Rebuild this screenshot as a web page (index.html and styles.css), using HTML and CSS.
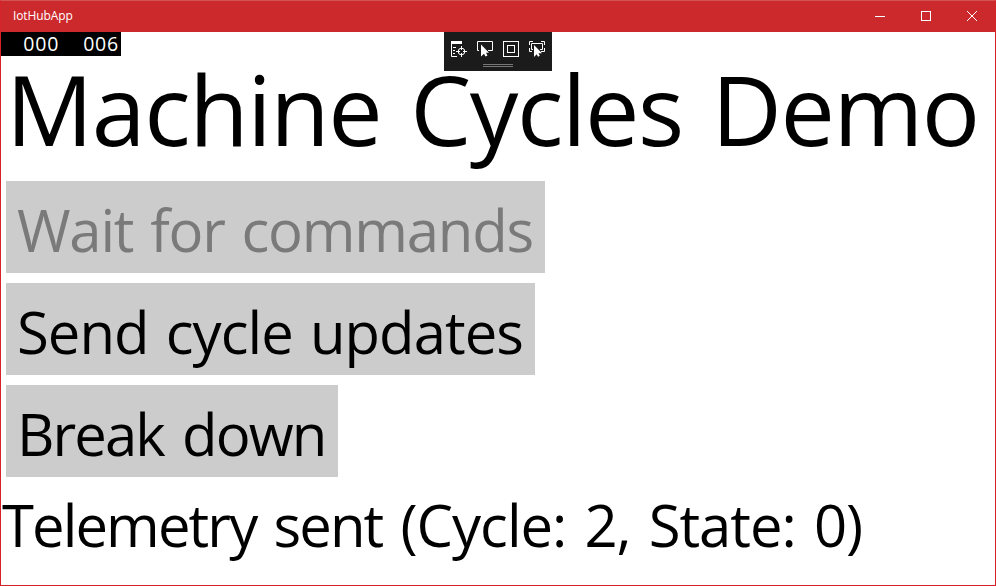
FILE: index.html
```
<!DOCTYPE html>
<html lang="en">
<head>
<meta charset="utf-8">
<title>IotHubApp</title>
<link rel="stylesheet" href="styles.css">
</head>
<body>
<div class="window">
  <header class="titlebar">
    <span class="app-name">IotHubApp</span>
    <div class="controls">
      <svg class="control" viewBox="0 0 46 31" shape-rendering="crispEdges"><path d="M18 15.500h10"/></svg>
      <svg class="control" viewBox="0 0 46 31" shape-rendering="crispEdges"><path d="M18.500 10.500h9v9h-9z"/></svg>
      <svg class="control" viewBox="0 0 46 31"><path d="M18 10l10 10M28 10l-10 10"/></svg>
    </div>
  </header>
  <main class="content">
    <div class="counters"><span>000</span><span>006</span></div>
    <div class="debug-bar">
      <div class="tools">
        <svg class="tool" viewBox="0 0 17 17"><path d="M1 1h11v3H1z" fill="#fff"/><path d="M1.500 3v13.500H7M3 7.500h3M3 10.500h2M3 13.500h2" class="line"/><circle cx="11.500" cy="11.500" r="3.300" class="line"/><path d="M11.500 6v4M11.500 13v4M6 11.500h4M13 11.500h4" class="line"/></svg>
        <svg class="tool" viewBox="0 0 17 17"><path d="M3 10.500H1.500v-9h15v9H12" class="line"/><path d="M5 4.500v12l3-2.800 1.500 2.800 2-1-1.500-2.700h3z" fill="#fff"/></svg>
        <svg class="tool" viewBox="0 0 17 17" shape-rendering="crispEdges"><path d="M1.500 1.500h15v15h-15zM5.500 5.500h7v7h-7z" class="line"/></svg>
        <svg class="tool" viewBox="0 0 17 17"><path d="M1.500 5V1.500H5M13 1.500h3.500V5M1.500 8v3.500H4M16.500 8v3.500H13M5 9.500H3.500v-6h11v6H12" class="line"/><path d="M6 5v12l2.700-2.700 1.300 2.400 1.800-.9-1.300-2.500H14z" fill="#fff"/></svg>
      </div>
      <div class="grip"></div>
    </div>
    <h1 class="title">Machine Cycles Demo</h1>
    <div class="actions">
      <button class="action wait" disabled>Wait for commands</button>
      <button class="action send">Send cycle updates</button>
      <button class="action break">Break down</button>
    </div>
    <p class="status"><span class="event">Telemetry sent</span> (Cycle: 2, State: 0)</p>
  </main>
</div>
</body>
</html>
```
FILE: styles.css
```
* { box-sizing: border-box; }
body { margin: 0; font-family: "Open Sans", "Noto Sans", sans-serif; color: #000; }
.window {
  width: 996px;
  height: 586px;
  overflow: hidden;
  background: #fff;
  border: 1px solid #d62328;
  border-top-color: #d35357;
}
.titlebar {
  height: 31px;
  padding-left: 12px;
  display: flex;
  justify-content: space-between;
  background: #cc292c;
  color: #fff;
}
.app-name { font-size: 12px; line-height: 30px; letter-spacing: -0.1px; }
.controls { display: flex; }
.control { width: 46px; height: 31px; fill: none; stroke: #fff; stroke-width: 1; }
.content { position: relative; }
.counters {
  position: absolute;
  top: 0;
  left: 0;
  width: 120px;
  height: 24px;
  padding-right: 2px;
  display: flex;
  justify-content: flex-end;
  gap: 24px;
  background: #000;
  color: #fff;
  font-size: 19.5px;
  line-height: 23px;
  letter-spacing: 0.8px;
}
.debug-bar {
  position: absolute;
  top: 0;
  left: 443px;
  width: 108px;
  height: 39px;
  padding: 8px 6px 0;
  background: #1b1b1b;
}
.tools { display: flex; gap: 9px; }
.tool { width: 17px; height: 17px; }
.line { fill: none; stroke: #fff; stroke-width: 1; }
.grip {
  width: 30px;
  height: 3px;
  margin: 7px auto 0 33px;
  border-top: 1px solid #777;
  border-bottom: 1px solid #777;
}
.title {
  height: 149px;
  margin: 0;
  padding: 26px 0 0 5px;
  font-size: 97px;
  font-weight: 400;
  line-height: 100px;
  letter-spacing: -1.45px;
  word-spacing: 5px;
  white-space: nowrap;
}
.actions {
  display: flex;
  flex-direction: column;
  align-items: flex-start;
  gap: 10px;
  margin-left: 5px;
}
.action {
  height: 92px;
  padding: 6px 0 0 11px;
  border: 0;
  background: #ccc;
  color: #000;
  font-family: inherit;
  font-size: 58px;
  line-height: 86px;
  text-align: left;
  word-spacing: 3px;
  white-space: nowrap;
}
.action:disabled { color: #7a7a7a; }
.wait { width: 539px; letter-spacing: -1.2px; }
.send { width: 529px; letter-spacing: -0.95px; }
.break { width: 332px; letter-spacing: -1.9px; word-spacing: 5px; }
.status {
  margin: 5px 0 0;
  padding-left: 1px;
  font-size: 58px;
  line-height: 86px;
  letter-spacing: -1px;
  word-spacing: 4px;
  white-space: nowrap;
}
.event { letter-spacing: -1.9px; }
```
